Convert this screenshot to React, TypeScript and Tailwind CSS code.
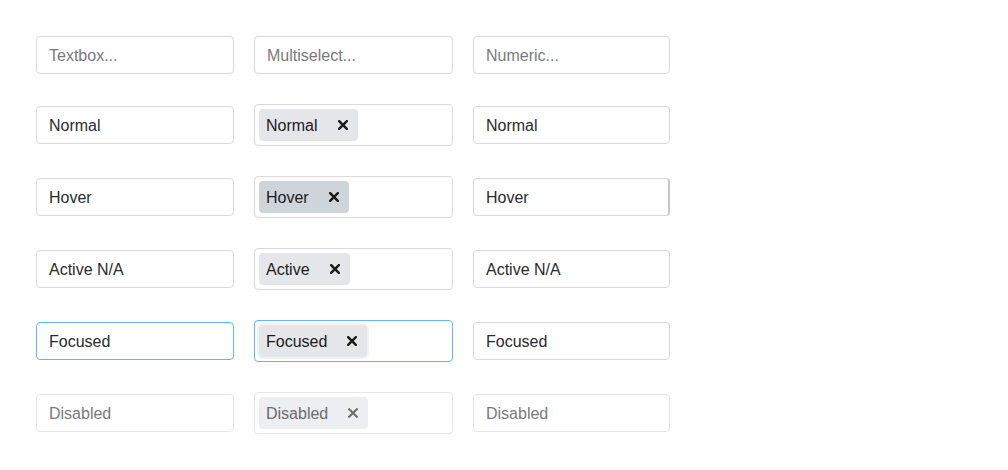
import React from "react";

const font = { fontFamily: '"Liberation Sans", Arial, sans-serif' };

function XIcon({ disabled }: { disabled?: boolean }) {
  return (
    <svg width="10" height="10" viewBox="0 0 10 10" className="block">
      <path
        d="M1.2 1.2 L8.8 8.8 M8.8 1.2 L1.2 8.8"
        stroke={disabled ? "#6b6b6b" : "#1a1a1a"}
        strokeWidth={disabled ? 2 : 2.4}
        strokeLinecap="square"
      />
    </svg>
  );
}

function TextBox({
  text,
  kind,
  w,
}: {
  text: string;
  kind: "placeholder" | "normal" | "focused" | "disabled" | "hover";
  w: string;
}) {
  const border =
    kind === "focused"
      ? "border-[#6cb2f7]"
      : kind === "disabled"
      ? "border-[#e6e6e6]"
      : "border-[#dadada]";
  const color =
    kind === "placeholder" || kind === "disabled" ? "text-[#7a7a7a]" : "text-[#2b2b2b]";
  return (
    <div
      className={`${w} h-[38px] rounded-[4px] border ${border} bg-white flex items-center pl-[12px] pt-[2px] text-[16px] ${color}`}
    >
      {text}
    </div>
  );
}

function NumBox({
  text,
  kind,
}: {
  text: string;
  kind: "placeholder" | "normal" | "focused" | "disabled" | "hover";
}) {
  const border = kind === "disabled" ? "border-[#e6e6e6]" : "border-[#dadada]";
  const right = kind === "hover" ? "border-r-2 border-r-[#c9c9cc]" : "";
  const color =
    kind === "placeholder" || kind === "disabled" ? "text-[#7a7a7a]" : "text-[#2b2b2b]";
  return (
    <div
      className={`w-[197px] h-[38px] rounded-[4px] border ${border} ${right} bg-white flex items-center pl-[12px] pt-[2px] text-[16px] ${color}`}
    >
      {text}
    </div>
  );
}

function Chip({
  text,
  kind,
}: {
  text: string;
  kind: "normal" | "hover" | "active" | "focused" | "disabled";
}) {
  const bg =
    kind === "hover"
      ? "bg-[#cfd3da]"
      : kind === "disabled"
      ? "bg-[#eceef1]"
      : "bg-[#e4e6ea]";
  const ring = kind === "focused" ? "shadow-[0_0_0_2px_#f1f2f4]" : "";
  const color = kind === "disabled" ? "text-[#6b6b6b]" : "text-[#1c1c1c]";
  return (
    <div
      className={`h-[32px] rounded-[4px] ${bg} ${ring} flex items-center pl-[7px] text-[16px] ${color}`}
    >
      <span className="pt-[2px]">{text}</span>
      <span className="ml-[10px] px-[10px] h-full flex items-center">
        <XIcon disabled={kind === "disabled"} />
      </span>
    </div>
  );
}

function Multi({
  chip,
  kind,
  placeholder,
}: {
  chip?: string;
  kind: "placeholder" | "normal" | "hover" | "active" | "focused" | "disabled";
  placeholder?: string;
}) {
  const border =
    kind === "focused"
      ? "border-[#6cb2f7]"
      : kind === "disabled"
      ? "border-[#e6e6e6]"
      : "border-[#dadada]";
  if (!chip) {
    return (
      <div
        className={`w-[199px] h-[38px] rounded-[4px] border ${border} bg-white flex items-center pl-[12px] pt-[2px] text-[16px] text-[#7a7a7a]`}
      >
        {placeholder}
      </div>
    );
  }
  return (
    <div
      className={`w-[199px] h-[42px] rounded-[4px] border ${border} bg-white flex items-center pl-[4px]`}
    >
      <Chip text={chip} kind={kind as "normal" | "hover" | "active" | "focused" | "disabled"} />
    </div>
  );
}

export default function App() {
  return (
    <div className="w-[1008px] h-[470px] bg-white pl-[36px] pt-[36px]" style={font}>
      <div className="flex flex-col gap-[30px]">
        <div className="flex items-center gap-[20px]">
          <TextBox text="Textbox..." kind="placeholder" w="w-[198px]" />
          <Multi kind="placeholder" placeholder="Multiselect..." />
          <NumBox text="Numeric..." kind="placeholder" />
        </div>
        <div className="flex items-center gap-[20px]">
          <TextBox text="Normal" kind="normal" w="w-[198px]" />
          <Multi kind="normal" chip="Normal" />
          <NumBox text="Normal" kind="normal" />
        </div>
        <div className="flex items-center gap-[20px]">
          <TextBox text="Hover" kind="normal" w="w-[198px]" />
          <Multi kind="hover" chip="Hover" />
          <NumBox text="Hover" kind="hover" />
        </div>
        <div className="flex items-center gap-[20px]">
          <TextBox text="Active N/A" kind="normal" w="w-[198px]" />
          <Multi kind="active" chip="Active" />
          <NumBox text="Active N/A" kind="normal" />
        </div>
        <div className="flex items-center gap-[20px]">
          <TextBox text="Focused" kind="focused" w="w-[198px]" />
          <Multi kind="focused" chip="Focused" />
          <NumBox text="Focused" kind="normal" />
        </div>
        <div className="flex items-center gap-[20px]">
          <TextBox text="Disabled" kind="disabled" w="w-[198px]" />
          <Multi kind="disabled" chip="Disabled" />
          <NumBox text="Disabled" kind="disabled" />
        </div>
      </div>
    </div>
  );
}
